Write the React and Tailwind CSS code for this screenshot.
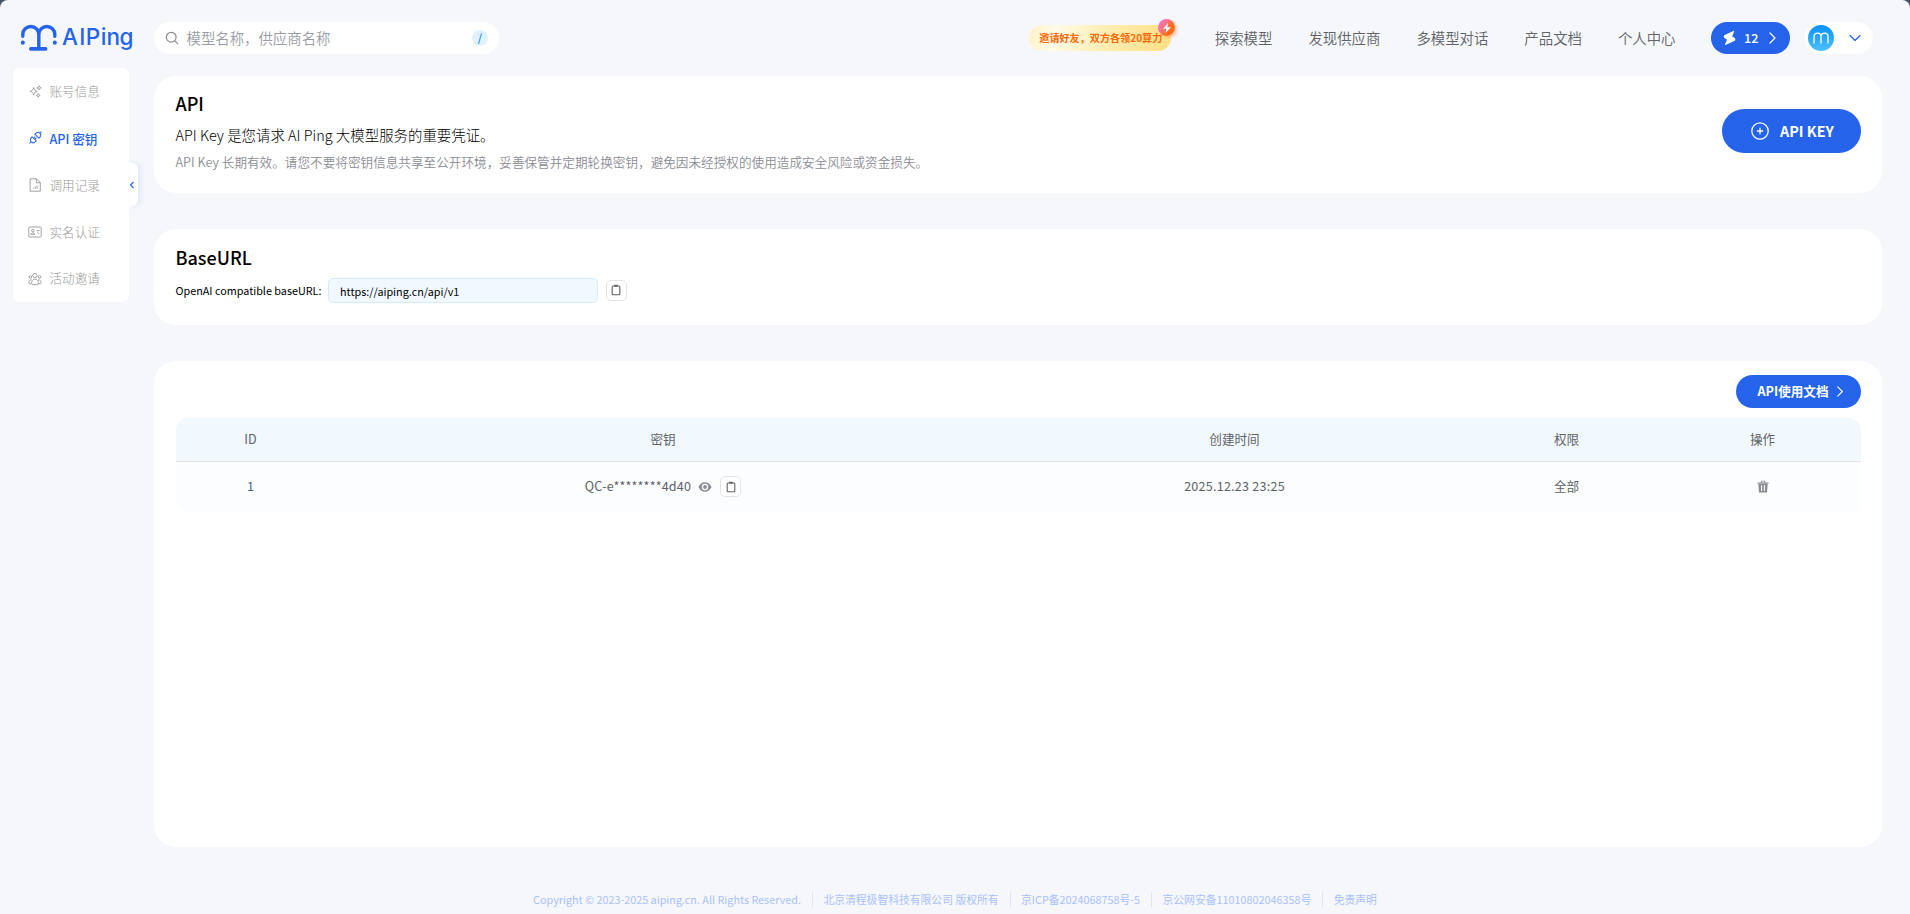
const nav = ['探索模型', '发现供应商', '多模型对话', '产品文档', '个人中心'];

const icons = {
  sparkle: (
    <svg viewBox="0 0 14 14" className="h-[13px] w-[13px]" fill="none" stroke="currentColor" strokeWidth=".9" strokeLinejoin="round">
      <path d="M5 2.600C5.500 5.300 6.300 6.200 9 6.800C6.300 7.400 5.500 8.300 5 11C4.500 8.300 3.700 7.400 1 6.800C3.700 6.200 4.500 5.300 5 2.600Z" />
      <path d="M10.800 .8L11.500 2.400L13.200 3.100L11.500 3.800L10.800 5.400L10.100 3.800L8.400 3.100L10.100 2.400Z" />
      <path d="M10 9.200L10.600 10.600L12 11.200L10.600 11.800L10 13.200L9.400 11.800L8 11.200L9.400 10.600Z" />
    </svg>
  ),
  plug: (
    <svg viewBox="0 0 14 14" className="mb-[2px] h-[13px] w-[13px]" fill="none" stroke="currentColor" strokeWidth="1.100" strokeLinecap="round" strokeLinejoin="round">
      <path d="M.8 13.200L2.300 11.700M3.300 6.200L7.800 10.700L6.300 12C5.200 12.900 3.600 12.900 2.500 11.800C1.400 10.700 1.300 8.900 2.300 7.700ZM6.200 3.300L10.700 7.800L11.900 6.300C12.900 5.100 12.800 3.500 11.700 2.400C10.600 1.300 8.900 1.200 7.700 2.200ZM11.700 2.300L13.200 .8M4.900 7.800L6.400 6.300M6.200 9.100L7.700 7.600" />
    </svg>
  ),
  file: (
    <svg viewBox="0 0 14 14" className="h-[14px] w-[14px]" fill="none" stroke="currentColor" strokeWidth=".9" strokeLinejoin="round">
      <path d="M2.200 .8H8.500L12.300 4.600V13.200H2.200ZM8.300 1V4.800H12.300M5.500 10.800V9.800M7.300 10.800V8.600M9.100 10.800V7.500" />
    </svg>
  ),
  card: (
    <svg viewBox="0 0 14 14" className="h-[14px] w-[14px]" fill="none" stroke="currentColor" strokeWidth=".9">
      <rect x=".8" y="2" width="12.400" height="10" rx="1" />
      <circle cx="4.800" cy="5.600" r="1.200" />
      <path d="M2.800 9.400C3 7.400 6.600 7.400 6.800 9.400ZM8.700 5.400H11.500M8.900 7.200H10M10 8.600H11.200" />
    </svg>
  ),
  users: (
    <svg viewBox="0 0 14 14" className="h-[14px] w-[14px]" fill="none" stroke="currentColor" strokeWidth=".9">
      <circle cx="7" cy="3.500" r="2.100" />
      <circle cx="2.400" cy="5" r="1.300" />
      <circle cx="11.600" cy="5" r="1.300" />
      <path d="M4.300 12.700C2.800 11.300 4 7.100 7 7.100S11.200 11.300 9.700 12.700ZM3.400 11.700H1.500C.2 10.500 1 7.700 3.800 7.900M10.600 11.700H12.500C13.800 10.500 13 7.700 10.200 7.900" />
    </svg>
  ),
};

const menu = [
  ['账号信息', 'sparkle'],
  ['API 密钥', 'plug'],
  ['调用记录', 'file'],
  ['实名认证', 'card'],
  ['活动邀请', 'users'],
];

const footer = [
  'Copyright © 2023-2025 aiping.cn. All Rights Reserved.',
  '北京清程极智科技有限公司 版权所有',
  '京ICP备2024068758号-5',
  '京公网安备11010802046358号',
  '免责声明',
];

function Logo() {
  return (
    <svg viewBox="0 0 120 30" className="h-[30px] w-[120px] text-[#2563eb]" fill="none" stroke="currentColor" strokeWidth="3.400" strokeLinecap="round">
      <path d="M2.800 13.300V11.300A8 7.800 0 0 1 18.800 11.300V25M18.800 11.300A8 7.800 0 0 1 34.800 11.300V13.300" />
      <path d="M10.900 25.800H25.500" strokeWidth="3.800" />
      <path d="M2.800 19.600V19.700M34.800 19.600V19.700" strokeWidth="4" />
      <text x="42 59.200 65.700 80.700 86.500 99.500" y="22" fontSize="22.500" fontWeight="500" fill="currentColor" stroke="none" className="font-['Inter',sans-serif]">AIPing</text>
    </svg>
  );
}

function Chevron({ className, d = 'M3 1L8 6L3 11' }) {
  return (
    <svg viewBox="0 0 12 12" className={className} fill="none" stroke="currentColor" strokeWidth="1.200" strokeLinecap="round" strokeLinejoin="round">
      <path d={d} />
    </svg>
  );
}

function CopyButton() {
  return (
    <button className="flex h-[21px] w-[21px] items-center justify-center rounded-[5px] border border-[#e2e4e8] bg-white text-[#606266]">
      <svg viewBox="0 0 12 12" className="h-3 w-3" fill="none" stroke="currentColor" strokeWidth="1.100">
        <rect x="2.200" y="2" width="7.600" height="8.800" rx="1" />
        <path d="M4.200 1.700H7.800" strokeWidth="1.800" />
      </svg>
    </button>
  );
}

export default function App() {
  return (
    <div className="h-[914px] w-[1910px] overflow-hidden bg-[#475569] font-['Noto_Sans_CJK_SC','Noto_Sans',sans-serif]">
      <div className="flex h-full flex-col rounded-t-[8px] bg-[#f5f7fb]">
        <header className="flex h-[76px] shrink-0 items-center pr-[37px] pl-[20px]">
          <div className="w-[134px] shrink-0"><Logo /></div>
          <div className="flex h-8 w-[345px] items-center rounded-full bg-white px-[11px]">
            <svg viewBox="0 0 14 14" className="h-[14px] w-[14px] text-[#8c8c8c]" fill="none" stroke="currentColor" strokeWidth="1.200" strokeLinecap="round">
              <circle cx="6.200" cy="6.200" r="4.900" />
              <path d="M9.800 9.800L12.700 12.700" />
            </svg>
            <span className="ml-[7.500px] text-[14.400px] font-[350] leading-none text-[#999ca3]">模型名称，供应商名称</span>
            <span className="ml-auto flex h-4 w-4 items-center justify-center rounded-full bg-[#e0f2fe] pb-px text-[11px] leading-none font-medium text-[#0284f7]">/</span>
          </div>
          <div className="ml-auto flex items-center">
            <div className="relative flex h-[26px] w-[142px] items-center rounded-full bg-[linear-gradient(100deg,#fff1c9_0%,#fffbe6_18%,#ffedb0_55%,#ffdf85_100%)] pt-px pl-[10px] text-[10.100px] font-bold leading-none whitespace-nowrap text-[#ff6a0a]">
              邀请好友，双方各领20算力
              <span className="absolute top-[-6px] left-[129px] flex h-[17px] w-[17px] items-center justify-center rounded-full bg-[linear-gradient(125deg,#f472d0_10%,#fb7185_40%,#ff6a13_65%)] shadow-[2px_2px_3px_#ff7a3060]">
                <svg viewBox="0 0 10 10" className="h-[10px] w-[10px]" fill="white"><path d="M6 0L1 5.800H4.300L3.700 10L9 4.300H5.500Z" /></svg>
              </span>
            </div>
            <nav className="ml-[43.500px] flex gap-9 text-[14.400px] font-[350] leading-none text-[#606266]">
              {nav.map((n) => <span key={n}>{n}</span>)}
            </nav>
            <div className="ml-[35.500px] flex h-8 w-[79px] items-center rounded-full bg-[#2563eb] pl-3 text-white">
              <svg viewBox="0 0 13 16" className="h-4 w-[13px]" fill="white"><path d="M10.300 .9Q11.400 .6 11.200 1.500L9.200 6.300L12 8.300Q12.800 9.500 12 10.700L3 14.800Q1.800 15.200 2 14.200L4 9.700L1.200 7.800Q.4 6.400 1.200 5.200Z" /></svg>
              <span className="ml-[8px] text-[12.600px] font-medium leading-none">12</span>
              <Chevron className="ml-[9px] h-[12px] w-[12px]" />
            </div>
            <div className="ml-[15px] flex h-8 w-[68px] items-center rounded-full bg-white pl-[3px] text-[#2563eb]">
              <span className="mb-px flex h-[26px] w-[26px] items-center justify-center rounded-full bg-[linear-gradient(180deg,#0a91ff,#4cc0fb)]">
                <svg viewBox="0 0 16 12" className="h-3 w-4" fill="none" stroke="white" strokeWidth="1.300" strokeLinecap="round"><path d="M1 11V4.500C1 0 8 0 8 4.500V11M8 4.500C8 0 15 0 15 4.500V11" /></svg>
              </span>
              <Chevron className="ml-[15px] h-3 w-3" d="M1 3.500L6 8.500L11 3.500" />
            </div>
          </div>
        </header>

        <div className="flex items-start">
          <aside className="relative mt-[-8px] ml-[13px] h-[234px] w-[116px] shrink-0 rounded-[6px] bg-white">
            <ul className="flex h-full flex-col">
              {menu.map(([label, icon], i) => (
                <li key={label} className={i === 1 ? 'flex flex-1 items-center gap-[7.500px] pt-px pl-[15px] text-[12.600px] font-medium leading-none text-[#2563eb]' : 'flex flex-1 items-center gap-[7.500px] pl-[15px] text-[12.600px] font-light leading-none text-[#999999]'}>
                  <span className="flex w-[14px] justify-center">{icons[icon]}</span>
                  {label}
                </li>
              ))}
            </ul>
            <span className="absolute top-[95px] left-[116px] h-[43px] w-[9px] rounded-r-[6px] bg-white shadow-[3px_0_5px_#2563eb18]" />
            <svg viewBox="0 0 6 8" className="absolute top-[113px] left-[116px] h-[8px] w-[6px] text-[#2563eb]" fill="none" stroke="currentColor" strokeWidth="1.200"><path d="M4.500 1L1.500 4L4.500 7" /></svg>
          </aside>

          <main className="ml-[25px] flex w-[1728px] flex-col gap-9">
            <section className="flex h-[117px] items-start justify-between rounded-[22px] bg-white pr-[21px] pl-[21.500px]">
              <div className="flex flex-col pt-[14px]">
                <h1 className="h-[34px] text-[18px] font-medium leading-[26px] text-black">API</h1>
                <p className="h-[27.500px] text-[14.400px] font-light leading-[22px] tracking-[.03px] text-black">API Key 是您请求 AI Ping 大模型服务的重要凭证。</p>
                <p className="text-[12.600px] font-[350] leading-[20px] tracking-[.02px] text-[#8c8c94]">API Key 长期有效。请您不要将密钥信息共享至公开环境，妥善保管并定期轮换密钥，避免因未经授权的使用造成安全风险或资金损失。</p>
              </div>
              <button className="mt-[33px] flex h-11 w-[139px] items-center rounded-full bg-[#2563eb] pl-[29px] text-white">
                <svg viewBox="0 0 18 18" className="h-[18px] w-[18px]" fill="none" stroke="currentColor" strokeWidth="1.300"><circle cx="9" cy="9" r="8.200" /><path d="M9 5.800V12.200M5.800 9H12.200" /></svg>
                <span className="ml-[11px] text-[14.400px] font-bold leading-none">API KEY</span>
              </button>
            </section>

            <section className="h-[96px] rounded-[22px] bg-white pt-[15px] pl-[21.500px]">
              <h2 className="text-[18px] font-medium leading-[26px] text-black">BaseURL</h2>
              <div className="mt-[8px] flex items-center">
                <span className="w-[152.500px] text-[10.800px] leading-none text-black">OpenAI compatible baseURL:</span>
                <div className="flex h-[25px] w-[270px] items-center rounded-[5px] border border-[#d5eafd] bg-[#f1f8ff] pt-px pl-[11px] text-[10.800px] leading-none text-black">https://aiping.cn/api/v1</div>
                <div className="mb-px ml-[7.500px]"><CopyButton /></div>
              </div>
            </section>

            <section className="h-[486px] rounded-[22px] bg-white px-[21.500px] pt-[14px]">
              <div className="flex justify-end">
                <button className="flex h-[33px] w-[125px] items-center rounded-full bg-[#2563eb] pl-[22px] text-white">
                  <span className="text-[12.600px] font-bold leading-none">API使用文档</span>
                  <Chevron className="ml-[6px] h-[11px] w-[11px]" />
                </button>
              </div>
              <div className="mt-[10px] overflow-hidden rounded-[12px] bg-[#fbfdff] text-[12.600px] leading-none text-[#606266]">
                <div className="grid h-[44px] grid-cols-[150px_675px_468px_196px_196px] items-center border-b border-[#e0e3e8] bg-[#f1f9ff] text-center">
                  <span>ID</span><span>密钥</span><span>创建时间</span><span>权限</span><span>操作</span>
                </div>
                <div className="grid h-[50px] grid-cols-[150px_675px_468px_196px_196px] items-center pb-px text-center">
                  <span className="text-[#4b6180]">1</span>
                  <div className="flex items-center justify-center">
                    <span className="tracking-[.16px]">QC-e********4d40</span>
                    <svg viewBox="0 0 14 12" className="ml-[7px] h-3 w-[14px]"><path d="M.5 6C3 -.3 11 -.3 13.500 6C11 12.300 3 12.300 .5 6Z" fill="#8b8d94" /><circle cx="7" cy="6" r="3.200" fill="white" /><circle cx="7" cy="6" r="1.900" fill="#8b8d94" /></svg>
                    <div className="ml-2"><CopyButton /></div>
                  </div>
                  <span className="tracking-[.22px]">2025.12.23 23:25</span>
                  <span>全部</span>
                  <svg viewBox="0 0 12 13" className="mx-auto h-[13px] w-3"><path d="M.5 2.500H11.500V3.700H.5ZM3.500 2.500L4.200 .7H7.800L8.500 2.500H7.500L7.100 1.600H4.900L4.500 2.500ZM1.300 4H10.700L10 12.600H2Z" fill="#8b8d94" /><path d="M4.600 5.200V11M7.400 5.200V11" stroke="white" strokeWidth="1" /></svg>
                </div>
              </div>
            </section>
          </main>
        </div>

        <footer className="mt-[44px] flex h-[17px] items-center justify-center text-[10.800px] leading-none text-[#a9c1fb]">
          {footer.map((f, i) => (
            <span key={f} className={i ? 'ml-[11px] flex h-[15px] items-center border-l border-[#dfe3ea] pl-[10.500px]' : 'flex h-[15px] items-center'}>{f}</span>
          ))}
        </footer>
      </div>
    </div>
  );
}
